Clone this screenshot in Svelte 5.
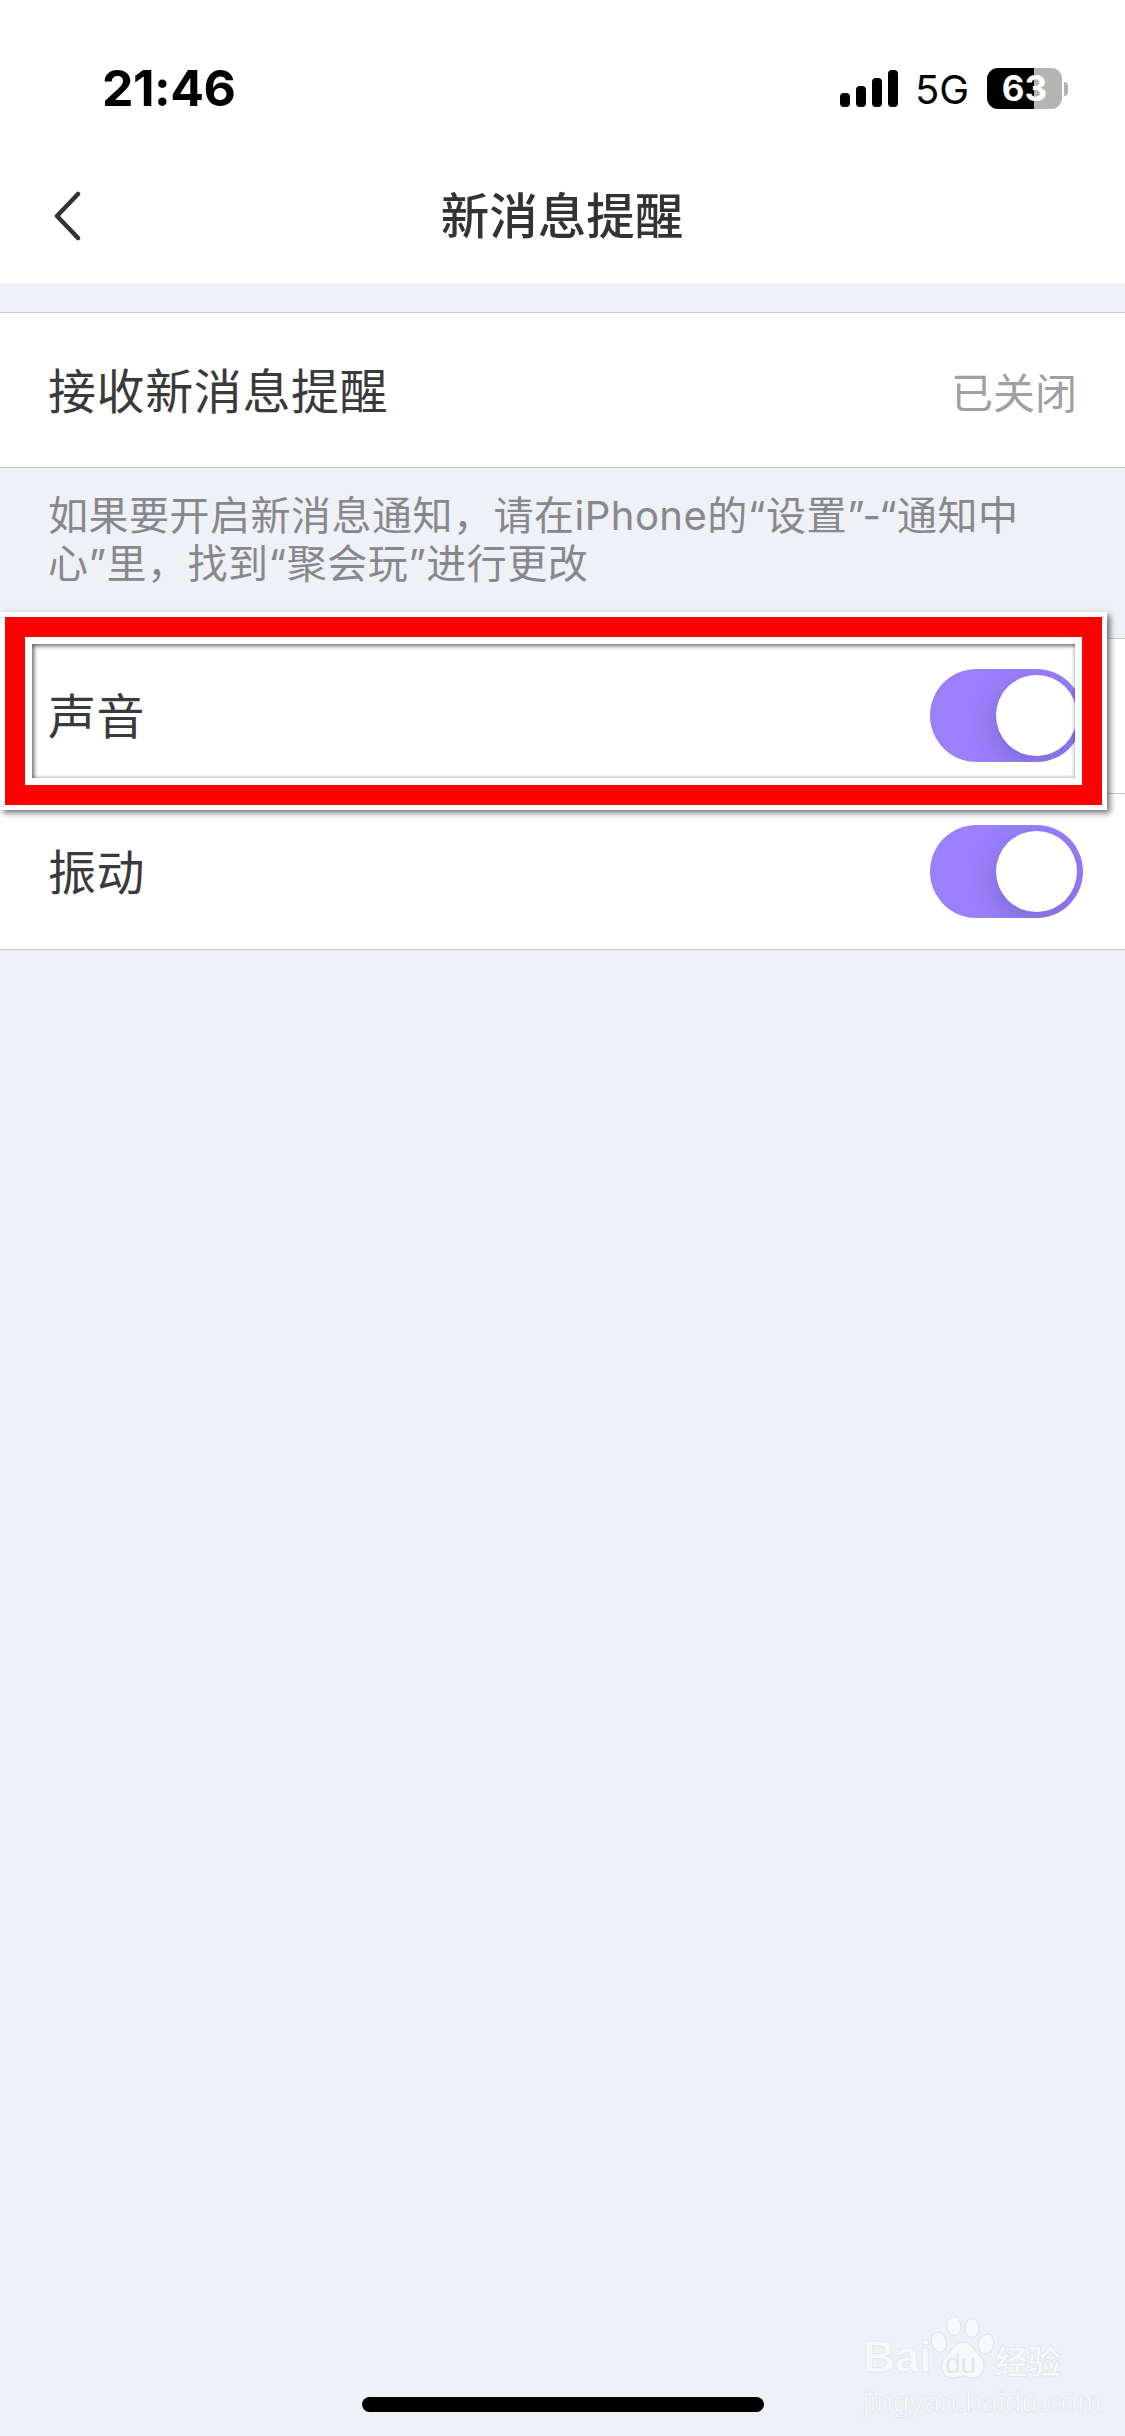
<script>
  const rows = [
    { label: '声音', marked: true },
    { label: '振动', marked: false }
  ];
</script>

<div class="page">
  <header class="top">
    <div class="status">
      <span class="time">21:46</span>
      <div class="status-right">
        <div class="signal">
          <i class="b1"></i><i class="b2"></i><i class="b3"></i><i class="b4"></i>
        </div>
        <span class="net">5G</span>
        <div class="battery"><span>63</span></div>
        <div class="tip"></div>
      </div>
    </div>
    <nav class="nav">
      <svg class="back" width="30" height="50" viewBox="0 0 30 50">
        <path d="M26 3 L5 25 L26 47" fill="none" stroke="#333" stroke-width="4.5" stroke-linecap="round" stroke-linejoin="round" />
      </svg>
      <h1>新消息提醒</h1>
    </nav>
  </header>

  <section class="group first">
    <div class="row">
      <span class="label">接收新消息提醒</span>
      <span class="value">已关闭</span>
    </div>
  </section>

  <p class="note">如果要开启新消息通知，请在iPhone的“设置”-“通知中心”里，找到“聚会玩”进行更改</p>

  <section class="group">
    {#each rows as row}
      <div class="row switch-row" class:marked={row.marked}>
        <span class="label">{row.label}</span>
        <div class="toggle"><div class="knob"></div></div>
        {#if row.marked}
          <div class="frame"><div class="frame-red"><div class="frame-inner"></div></div></div>
        {/if}
      </div>
    {/each}
  </section>

  <div class="watermark">
    <div class="wm-top">
      <span class="wm-bai">Bai</span>
      <div class="wm-paw">
        <svg width="66" height="66" viewBox="0 0 66 66">
          <g fill="#f8f9fc" stroke="#dfe2e8" stroke-width="1">
            <ellipse cx="9" cy="26" rx="7.5" ry="10" transform="rotate(-15 9 26)" />
            <ellipse cx="24" cy="10" rx="7" ry="9.5" />
            <ellipse cx="42" cy="12" rx="7" ry="9.5" />
            <ellipse cx="56" cy="28" rx="7.5" ry="10" transform="rotate(15 56 28)" />
            <path d="M33 26 C41 26 44 34 50 40 C58 48 53 62 42 62 C37 62 36 60 33 60 C30 60 28 62 23 62 C12 62 8 48 16 40 C22 34 25 26 33 26 Z" />
          </g>
        </svg>
        <span class="wm-du">du</span>
      </div>
      <span class="wm-cn">经验</span>
    </div>
    <div class="wm-url">jingyan.baidu.com</div>
  </div>

  <div class="home"></div>
</div>

<style>
  :global(body) {
    margin: 0;
    background: #eef1f6;
  }

  .page {
    position: relative;
    height: 2436px;
    overflow: hidden;
    background: #eef1f6;
    color: #3a3a3c;
    font-family: Inter, "Noto Sans CJK SC", sans-serif;
  }

  .top {
    height: 283px;
    background: #fff;
  }

  .status {
    display: flex;
    justify-content: space-between;
    align-items: flex-start;
    height: 150px;
    padding: 0 57px 0 102px;
    box-sizing: border-box;
  }

  .time {
    margin-top: 55px;
    font-size: 50px;
    line-height: 66px;
    font-weight: 700;
    letter-spacing: -0.5px;
    color: #000;
  }

  .status-right {
    display: flex;
    align-items: flex-start;
    margin-top: 68px;
  }

  .signal {
    display: flex;
    align-items: flex-end;
    gap: 6px;
    height: 39px;
    width: 58px;
  }

  .signal i {
    display: block;
    width: 10px;
    border-radius: 4px;
    background: #000;
  }

  .b1 { height: 14px; }
  .b2 { height: 21px; }
  .b3 { height: 29px; }
  .b4 { height: 37px; }

  .net {
    margin-left: 17px;
    width: 53px;
    font-size: 40px;
    line-height: 44px;
    color: #000;
  }

  .battery {
    margin-left: 19px;
    width: 75px;
    height: 41px;
    border-radius: 11px;
    background: linear-gradient(90deg, #000 0 47px, #b4b4b4 47px);
    color: #fff;
    font-size: 35px;
    line-height: 41px;
    font-weight: 700;
    text-align: center;
  }

  .tip {
    width: 4px;
    height: 14px;
    margin: 14px 0 0 2px;
    border-radius: 0 4px 4px 0;
    background: #b4b4b4;
  }

  .nav {
    position: relative;
    display: flex;
    justify-content: center;
    align-items: center;
    height: 133px;
  }

  .back {
    position: absolute;
    left: 52px;
    top: 41px;
  }

  h1 {
    margin: 0 1px 0 0;
    font-size: 48.5px;
    line-height: 66px;
    font-weight: 500;
    color: #333;
  }

  .group {
    background: #fff;
    border-top: 1.5px solid #c9c9cd;
  }

  .first {
    margin-top: 29px;
  }

  .row {
    position: relative;
    display: flex;
    justify-content: space-between;
    align-items: center;
    box-sizing: border-box;
    height: 155.5px;
    padding: 0 48px;
    border-bottom: 1.5px solid #c9c9cd;
    font-size: 48px;
  }

  .first .row {
    height: 155px;
  }

  .label {
    margin-bottom: 5px;
    letter-spacing: 0.6px;
  }

  .value {
    font-size: 42px;
    color: #a0a0a3;
  }

  .note {
    margin: 0;
    box-sizing: border-box;
    height: 169.5px;
    padding: 24px 40px 0 48px;
    font-size: 40px;
    line-height: 48px;
    letter-spacing: 0.5px;
    color: #86888c;
  }

  .switch-row {
    padding-right: 42px;
  }

  .toggle {
    position: relative;
    width: 153px;
    height: 93px;
    overflow: hidden;
    border-radius: 47px;
    background: #9a80fb;
  }

  .knob {
    position: absolute;
    top: 6px;
    right: 6px;
    width: 81px;
    height: 81px;
    border-radius: 50%;
    background: #fff;
    box-shadow: 0 8px 26px rgba(50, 40, 110, 0.28);
  }

  .frame {
    position: absolute;
    left: 0;
    top: -27px;
    width: 1107px;
    height: 198px;
    box-sizing: border-box;
    border: 5px solid #fff;
    box-shadow: 3px 3px 6px rgba(0, 0, 0, 0.55);
    z-index: 2;
  }

  .frame-red {
    box-sizing: border-box;
    height: 100%;
    border: 20px solid #f00;
  }

  .frame-inner {
    position: relative;
    box-sizing: border-box;
    height: 100%;
    border: 7px solid #fff;
  }

  .frame-inner::after {
    content: "";
    position: absolute;
    inset: 0;
    box-shadow: inset 2px 2px 4px rgba(0, 0, 0, 0.6), inset -2px -2px 3px rgba(0, 0, 0, 0.12);
  }

  .watermark {
    position: absolute;
    left: 863px;
    top: 2316px;
    width: 205px;
    color: #f8f9fc;
    font-family: "Liberation Sans", sans-serif;
    -webkit-text-stroke: 0.5px #dcdfe6;
  }

  .wm-top {
    display: flex;
    align-items: flex-end;
    height: 66px;
  }

  .wm-bai {
    width: 67px;
    font-size: 44px;
    line-height: 50px;
    font-weight: 700;
  }

  .wm-paw {
    position: relative;
    width: 64px;
    height: 66px;
  }

  .wm-du {
    position: absolute;
    left: 15px;
    top: 33px;
    font-size: 28px;
    line-height: 30px;
    color: #e4e6ec;
    -webkit-text-stroke: 0;
  }

  .wm-cn {
    margin-left: 1px;
    font-family: "Noto Sans CJK SC", sans-serif;
    font-size: 33px;
    line-height: 44px;
    font-weight: 700;
    white-space: nowrap;
  }

  .wm-url {
    margin-top: 4px;
    font-size: 29px;
    line-height: 32px;
    letter-spacing: 0.3px;
    white-space: nowrap;
  }

  .home {
    position: absolute;
    left: 362px;
    top: 2397px;
    width: 402px;
    height: 15px;
    border-radius: 8px;
    background: #000;
  }
</style>
